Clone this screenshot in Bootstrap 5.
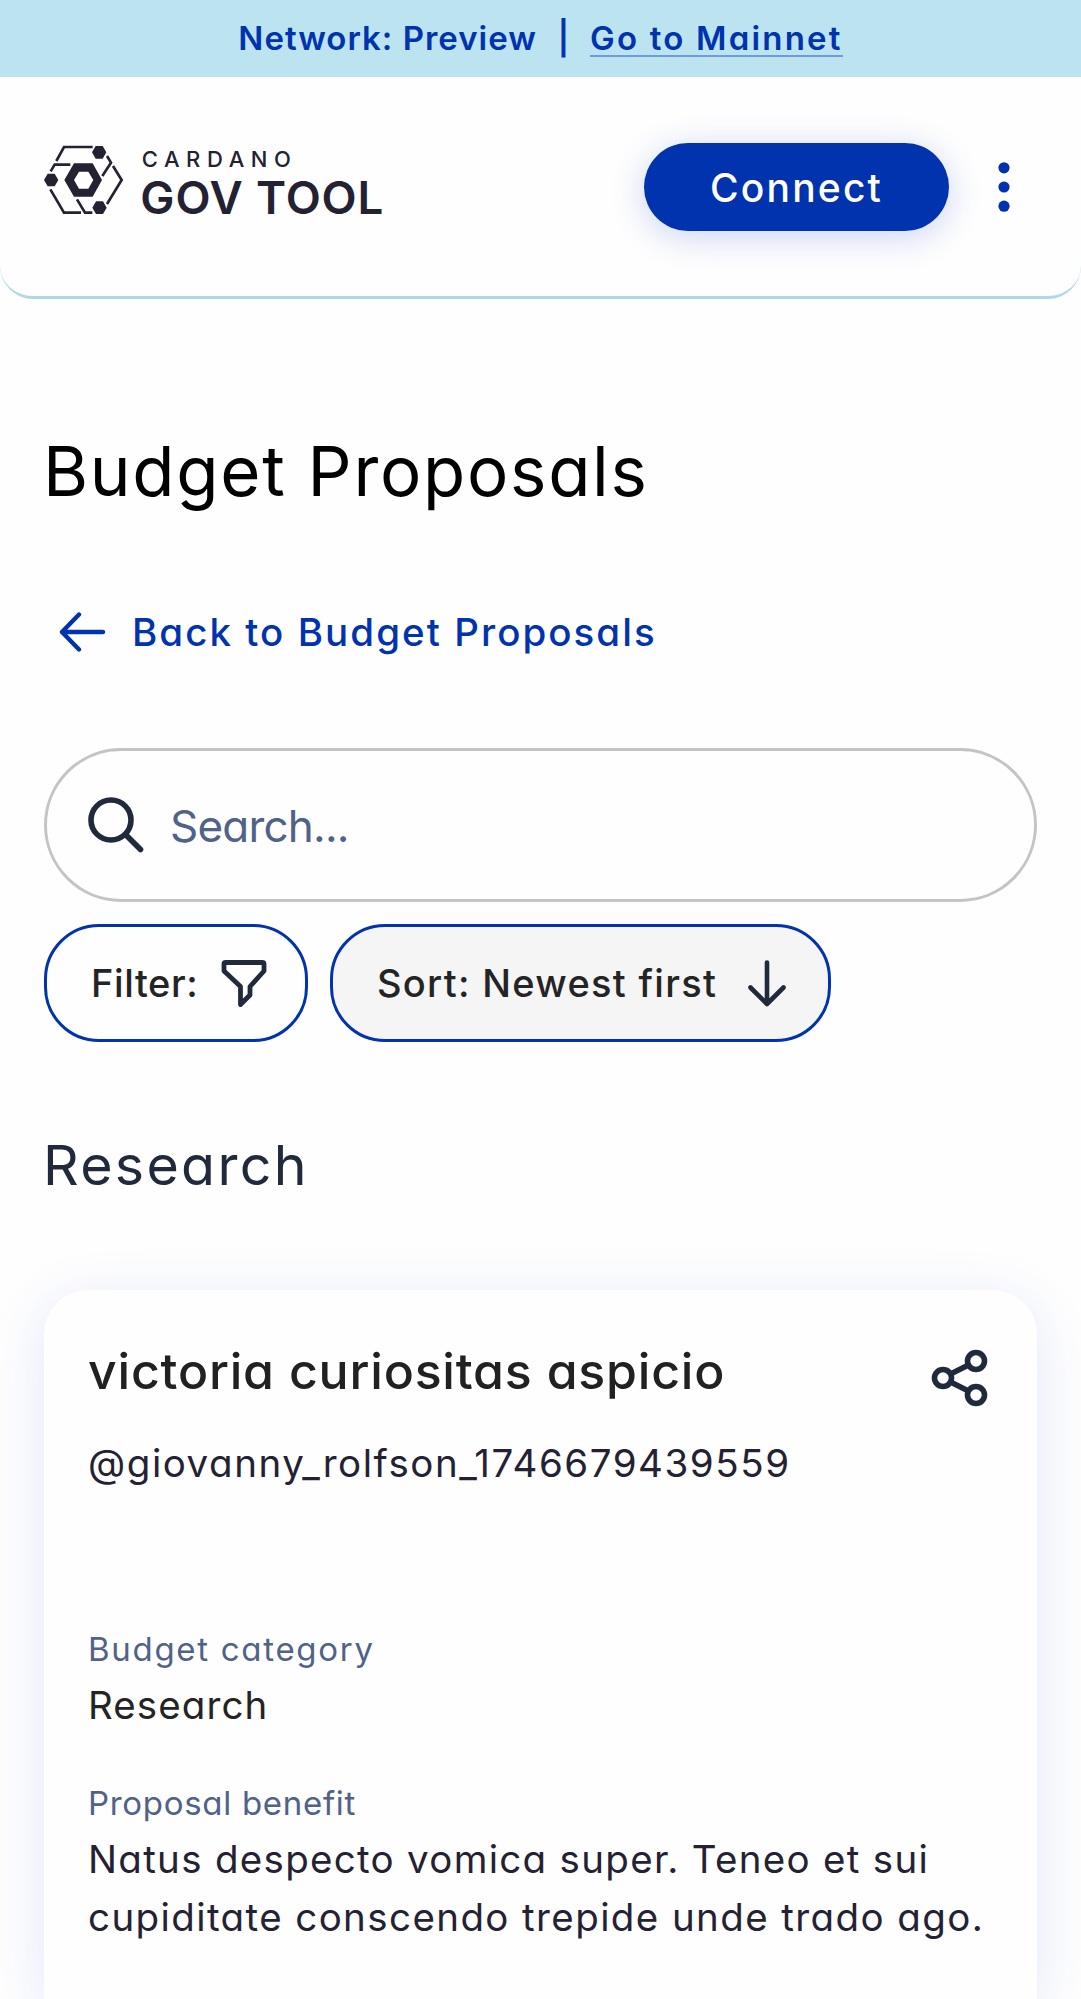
<!DOCTYPE html>
<html lang="en">
<head>
<meta charset="utf-8">
<meta name="viewport" content="width=device-width, initial-scale=1">
<title>Budget Proposals</title>
<link href="https://cdn.jsdelivr.net/npm/bootstrap@5.3.0/dist/css/bootstrap.min.css" rel="stylesheet">
<style>
  :root { --gt-blue: #0033ad; --gt-ink: #242232; --gt-navy: #212a3d; --gt-slate: #506288; }
  body { font-family: Inter, "Liberation Sans", sans-serif; font-feature-settings: "cv11"; color: var(--gt-ink); background: #fefefe; }
  .net-banner { height: 77px; background: #bce4f0; color: var(--gt-blue); font-size: 33px; font-weight: 600; white-space: pre; }
  .net-name { letter-spacing: 1px; }
  .net-bar { width: 53px; }
  .net-link { color: inherit; letter-spacing: 2.2px; text-decoration: none; line-height: 33px; height: 33px; box-shadow: 0 2px 0 #6f9bd8; }
  .gt-header { height: 222px; padding: 0 44px; border-bottom: 3px solid #add8e6; border-radius: 0 0 33px 33px; background: #fefefe; }
  .gt-logo { margin-bottom: 14px; overflow: visible; }
  .btn-connect { width: 305px; height: 88px; background: var(--gt-blue); color: #fff; font-size: 39px; font-weight: 500; letter-spacing: 2.2px; box-shadow: 0 6px 34px rgba(47,80,200,.24); }
  .kebab { margin-left: 22px; }
  .gt-main { padding: 122px 44px 0; }
  .page-title { font-size: 69px; line-height: 100px; letter-spacing: 1.7px; font-weight: 400; color: #000; margin-left: -1px; }
  .back-link { margin-top: 82px; padding-left: 15px; gap: 26px; font-size: 38.5px; line-height: 58px; font-weight: 500; letter-spacing: 2.05px; color: var(--gt-blue); text-decoration: none; }
  .search-box { margin-top: 87px; height: 154px; border: 3px solid #c4c4c4; border-radius: 77px; padding: 0 40px; gap: 25px; }
  .search-box input { font-size: 44px; letter-spacing: -.8px; font-feature-settings: "cv11"; color: var(--gt-navy); padding-top: 2px !important; }
  .search-box input::placeholder { color: var(--gt-slate); opacity: 1; }
  .chip-row { margin-top: 22px; gap: 22px; }
  .chip { height: 118px; border: 3px solid var(--gt-blue); border-radius: 55px; color: #242424; font-size: 38px; font-weight: 500; padding: 0 35px 0 44px; }
  .chip-filter { width: 264px; letter-spacing: .6px; }
  .chip-sort { width: 501px; letter-spacing: 1.3px; background: #f5f5f5; }
  .section-title { margin-top: 83px; font-size: 55.5px; line-height: 80px; font-weight: 400; letter-spacing: 2.3px; color: var(--gt-navy); margin-left: -1px; }
  .proposal { margin-top: 85px; padding: 44px 44px 0; border-radius: 44px 44px 0 0; background: #fefefe; box-shadow: 0 11px 55px rgba(47,80,230,.13); }
  .proposal-title { font-size: 50px; line-height: 74px; font-weight: 500; letter-spacing: .8px; color: #212121; }
  .proposal-text { font-size: 38.5px; line-height: 58px; letter-spacing: 1.4px; }
  .benefit-lead { letter-spacing: 1.3px; }
  .author { margin-top: 26px; letter-spacing: 1.54px; }
  .category-value { letter-spacing: 1.1px; color: #242424; }
  .field-label { font-size: 33px; line-height: 50px; letter-spacing: 1.7px; color: var(--gt-slate); margin-bottom: 2px; }
  .label-tight { letter-spacing: .7px; }
  .first-field { margin-top: 132px; }
  .next-field { margin-top: 44px; }
  .share-icon { margin: 15px 4px 0 0; }
</style>
<script src="https://cdn.jsdelivr.net/npm/bootstrap@5.3.0/dist/js/bootstrap.bundle.min.js"></script>
</head>
<body class="vh-100 overflow-hidden d-flex flex-column">
<div class="net-banner d-flex flex-shrink-0 justify-content-center align-items-center"><span class="net-name">Network: Preview</span><span class="net-bar text-center">|</span><a class="net-link" href="#">Go to Mainnet</a></div>

<header class="gt-header d-flex flex-shrink-0 align-items-center">
  <svg class="gt-logo" width="340" height="80" viewBox="42 30 1020 240" fill="#242232" role="img" aria-label="Cardano Gov Tool">
    <path d="M186 67l11-19h21l11 19-11 19h-21zM42 150l11-19h21l11 19-11 19H53zM187 233l11-19h21l11 19-11 19h-21z"/>
    <path fill-rule="evenodd" d="M103 150l29-50h56l28 50-28 50h-56zM132 150l15 26h28l15-26-15-25h-28z"/>
    <path fill="none" stroke="#242232" stroke-width="8" d="M79 93l23-42h86M62 124l12-20h47M61 178l41 70h51M141 208l24 40h22M231 222l44-72-26-42M231 78l12 20-26 40"/>
    <text x="335" y="112" font-size="66" font-weight="500" letter-spacing="19.800">CARDANO</text>
    <text x="331" y="251" font-size="137" font-weight="600" letter-spacing="2.600">GOV TOOL</text>
  </svg>
  <button class="btn btn-connect rounded-pill border-0 ms-auto p-0 pt-1" type="button">Connect</button>
  <svg class="kebab" width="66" height="66" viewBox="0 0 66 66" fill="#0033ad"><circle cx="33" cy="13.8" r="5.6"/><circle cx="33" cy="33" r="5.6"/><circle cx="33" cy="52.2" r="5.6"/></svg>
</header>

<main class="gt-main d-flex flex-column flex-grow-1">
  <h1 class="page-title mb-0">Budget Proposals</h1>
  <a class="back-link d-flex align-items-center" href="#">
    <svg width="47" height="42" viewBox="0 0 47 42" fill="none" stroke="#0033ad" stroke-width="4.4" stroke-linecap="round" stroke-linejoin="round"><path d="M44 21H3M20 3.500L3 21l17 17.500"/></svg>
    <span>Back to Budget Proposals</span>
  </a>

  <div class="search-box d-flex align-items-center">
    <svg class="flex-shrink-0" width="58" height="58" viewBox="0 0 58 58" fill="none" stroke="#212a3d" stroke-width="5.600" stroke-linecap="round"><circle cx="24" cy="24" r="20"/><path d="M38.500 38.500L53.500 53.500"/></svg>
    <input class="form-control border-0 shadow-none bg-transparent p-0" type="text" placeholder="Search...">
  </div>

  <div class="chip-row d-flex">
    <button class="chip chip-filter btn d-flex align-items-center justify-content-between" type="button">Filter:
      <svg width="50" height="50" viewBox="0 0 50 50" fill="none" stroke="#212a3d" stroke-width="4.800" stroke-linejoin="round"><path d="M5.500 4.500h37q1.500 0 1.500 1.500v7L30 28.500v8.500L20.500 46.500V28.500L4 13V6Q4 4.500 5.500 4.500z"/></svg>
    </button>
    <button class="chip chip-sort btn d-flex align-items-center justify-content-between" type="button">Sort: Newest first
      <svg width="50" height="50" viewBox="0 0 50 50" fill="none" stroke="#212a3d" stroke-width="4.600" stroke-linecap="round" stroke-linejoin="round"><path d="M24 4.500V46M7.500 29.500L24 46l16.500-16.500"/></svg>
    </button>
  </div>

  <h2 class="section-title mb-0">Research</h2>

  <article class="proposal flex-grow-1">
    <div class="d-flex justify-content-between align-items-start">
      <h3 class="proposal-title mb-0">victoria curiositas aspicio</h3>
      <svg class="share-icon" width="58" height="58" viewBox="0 0 58 58" fill="none" stroke="#212a3d" stroke-width="5.600"><circle cx="12" cy="29" r="8.500"/><circle cx="45" cy="12" r="8.500"/><circle cx="45" cy="46" r="8.500"/><path d="M19.500 25L37.500 16M19.500 33L37.500 42"/></svg>
    </div>
    <p class="proposal-text author mb-0">@giovanny_rolfson_1746679439559</p>
    <div class="first-field">
      <div class="field-label">Budget category</div>
      <div class="proposal-text category-value">Research</div>
    </div>
    <div class="next-field">
      <div class="field-label label-tight">Proposal benefit</div>
      <div class="proposal-text"><span class="benefit-lead">Natus despecto vomica super. Teneo et sui</span><br>cupiditate conscendo trepide unde trado ago.</div>
    </div>
  </article>
</main>
</body>
</html>
